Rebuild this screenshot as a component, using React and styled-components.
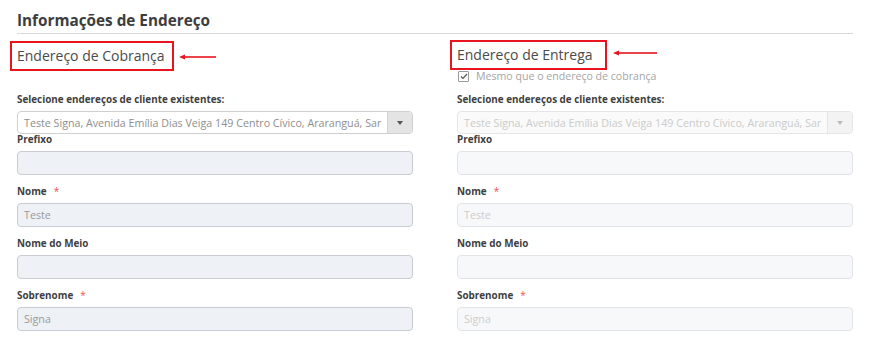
import React from 'react';
import styled, { createGlobalStyle } from 'styled-components';

const GlobalStyle = createGlobalStyle`
    body {
        margin: 0;
        background: #ffffff;
        font-family: "Open Sans", "Liberation Sans", sans-serif;
    }
`;

const Page = styled.div`
    padding: 10px 19px 0 17px;
`;

const Heading = styled.h2`
    margin: 0;
    font-size: 15.3px;
    font-weight: 700;
    line-height: 20px;
    color: #3d3d3d;
    padding-bottom: 3px;
    border-bottom: 1px solid #d9d9d9;
`;

const Columns = styled.div`
    display: grid;
    grid-template-columns: 396px 396px;
    column-gap: 44px;
    margin-top: 7px;
`;

const Column = styled.section`
    display: flex;
    flex-direction: column;
`;

const Head = styled.div`
    height: 51px;
    display: flex;
    flex-direction: column;
`;

const TitleRow = styled.div`
    display: flex;
    align-items: center;
    margin-left: -7px;
    margin-top: ${p => p.$top || 0}px;
`;

const Title = styled.h3`
    margin: 0;
    font-size: 14px;
    font-weight: 400;
    line-height: 26px;
    color: #4a4a4a;
    padding: 0 ${p => p.$padRight || 7}px 0 5px;
    border: 2px solid #e8141e;
`;

const Arrow = styled.svg`
    margin-left: ${p => p.$gap}px;
    margin-top: ${p => p.$shift || 0}px;
`;

const CheckRow = styled.label`
    display: flex;
    align-items: center;
    gap: 7px;
    margin-left: 1px;
    font-size: 10.6px;
    line-height: 12px;
    color: #a5a5a5;
`;

const CheckBox = styled.span`
    width: 9px;
    height: 9px;
    border: 1px solid #9a9a9a;
    border-radius: 1px;
    display: flex;
    align-items: center;
    justify-content: center;
    background: #fff;
`;

const Field = styled.div`
    display: flex;
    flex-direction: column;
    margin-bottom: ${p => (p.$tight ? -2 : 9)}px;
`;

const Label = styled.div`
    font-size: 9.9px;
    font-weight: 700;
    line-height: 14px;
    color: #3f3f3f;
    margin-bottom: 5px;
`;

const Required = styled.span`
    color: #ef5350;
    margin-left: 7px;
    font-weight: 400;
`;

const Input = styled.div`
    box-sizing: border-box;
    height: 24px;
    border-radius: 4px;
    border: 1px solid ${p => (p.$disabled ? '#e2e4e8' : '#c8ccd2')};
    background: ${p => (p.$disabled ? '#f7f8fa' : '#eef1f5')};
    padding: 0 6px;
    display: flex;
    align-items: center;
    font-size: 10.7px;
    color: ${p => (p.$disabled ? '#cdcdcd' : '#9a9a9a')};
`;

const Select = styled.div`
    box-sizing: border-box;
    height: 23px;
    border-radius: 4px;
    border: 1px solid ${p => (p.$disabled ? '#e6e6e6' : '#cfcfcf')};
    background: ${p => (p.$disabled ? '#fafafa' : '#ffffff')};
    display: flex;
    overflow: hidden;
`;

const SelectText = styled.div`
    flex: 1;
    padding: 0 6px;
    display: flex;
    align-items: center;
    white-space: nowrap;
    overflow: hidden;
    font-size: 10.7px;
    color: ${p => (p.$disabled ? '#cbcbcb' : '#8e8e8e')};
`;

const SelectButton = styled.div`
    width: 24px;
    border-left: 1px solid ${p => (p.$disabled ? '#e6e6e6' : '#d4d4d4')};
    background: ${p => (p.$disabled ? '#f3f3f3' : '#e4e4e4')};
    display: flex;
    align-items: center;
    justify-content: center;
`;

const Caret = ({ color }) => (
    <svg width="6" height="4" viewBox="0 0 6 4">
        <path d="M0 0 L6 0 L3 4 Z" fill={color} />
    </svg>
);

const RedArrow = ({ width, shift, gap }) => (
    <Arrow $shift={shift} $gap={gap} width={width} height="6" viewBox={`0 0 ${width} 6`}>
        <path d="M0 3 L6 0.5 L6 5.5 Z" fill="#e8141e" />
        <rect x="5" y="2.2" width={width - 5} height="1.6" fill="#e8141e" />
    </Arrow>
);

const address = 'Teste Signa, Avenida Emília Dias Veiga 149 Centro Cívico, Araranguá, Sar';

const AddressColumn = ({ title, arrow, shift, gap, top, padRight, disabled, sameAs }) => (
    <Column>
        <Head>
            <TitleRow $top={top}>
                <Title $padRight={padRight}>{title}</Title>
                <RedArrow width={arrow} shift={shift} gap={gap} />
            </TitleRow>
            {sameAs && (
                <CheckRow>
                    <CheckBox>
                        <svg width="8" height="7" viewBox="0 0 8 7">
                            <path d="M1 3.5 L3 5.5 L7 1" stroke="#555" strokeWidth="1.2" fill="none" />
                        </svg>
                    </CheckBox>
                    Mesmo que o endereço de cobrança
                </CheckRow>
            )}
        </Head>
        <Field $tight>
            <Label>Selecione endereços de cliente existentes:</Label>
            <Select $disabled={disabled}>
                <SelectText $disabled={disabled}>{address}</SelectText>
                <SelectButton $disabled={disabled}>
                    <Caret color={disabled ? '#bdbdbd' : '#555'} />
                </SelectButton>
            </Select>
        </Field>
        <Field>
            <Label>Prefixo</Label>
            <Input $disabled={disabled} />
        </Field>
        <Field>
            <Label>Nome<Required>*</Required></Label>
            <Input $disabled={disabled}>Teste</Input>
        </Field>
        <Field>
            <Label>Nome do Meio</Label>
            <Input $disabled={disabled} />
        </Field>
        <Field>
            <Label>Sobrenome<Required>*</Required></Label>
            <Input $disabled={disabled}>Signa</Input>
        </Field>
    </Column>
);

export default function App() {
    return (
        <Page>
            <GlobalStyle />
            <Heading>Informações de Endereço</Heading>
            <Columns>
                <AddressColumn title="Endereço de Cobrança" arrow={37} shift={2} gap={5} />
                <AddressColumn
                    title="Endereço de Entrega"
                    arrow={44}
                    shift={-5}
                    gap={6}
                    top={-1}
                    padRight={12}
                    disabled
                    sameAs
                />
            </Columns>
        </Page>
    );
}
